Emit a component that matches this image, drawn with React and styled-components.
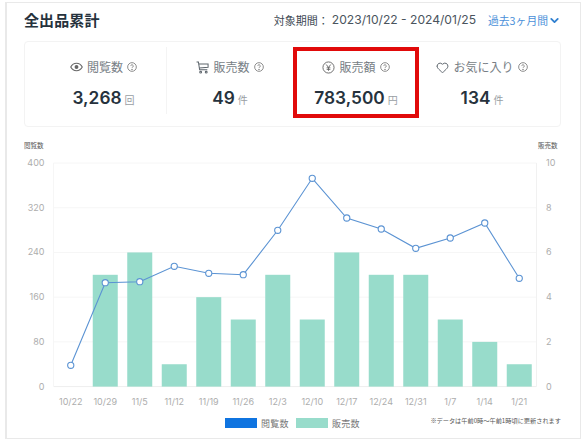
import React from 'react';
import styled, { createGlobalStyle } from 'styled-components';
import { Heart, ChevronDown } from 'lucide-react';

const Global = createGlobalStyle`
  html, body { margin: 0; padding: 0; background: #fff; }
  body { font-family: "Inter", "Noto Sans CJK JP", sans-serif; }
`;
const Page = styled.div`
  width: 586px; height: 442px; box-sizing: border-box; padding: 2px 5px 3px 5px; overflow: hidden;
`;
const Card = styled.section`
  box-sizing: border-box; height: 100%; border: 1px solid #e9e9e9; border-left-width: 2px;
  padding: 0 19px 0 17px; display: flex; flex-direction: column; background: #fff;
`;
const Header = styled.header`
  height: 38px; display: flex; align-items: center; justify-content: space-between; padding-bottom: 6px; box-sizing: border-box;
`;
const Title = styled.h1`
  margin: 0; font: 700 15px/1 "Noto Sans CJK JP", sans-serif; color: #26323d; letter-spacing: 0.1px;
`;
const Period = styled.div`
  display: flex; align-items: center; font: 400 11px/1 "Noto Sans CJK JP", sans-serif; color: #3d4852; padding-top: 2px;
`;
const Dates = styled.span`
  font-family: "Inter", sans-serif; font-size: 12.1px; margin-left: 3px; color: #4a545d;
`;
const RangeButton = styled.button`
  display: flex; align-items: center; gap: 0; margin-left: 12px; padding: 0; border: 0; background: none;
  font: 400 10.8px/1 "Noto Sans CJK JP", sans-serif; color: #4a90d9;
  svg { color: #2f7fd0; }
`;
const StatsPanel = styled.div`
  height: 86px; box-sizing: border-box; border: 1px solid #f3f3f3; border-radius: 4px; padding: 5px 16px 8px;
  display: grid; grid-template-columns: repeat(4, 126px); flex-shrink: 0;
`;
const Stat = styled.div`
  box-sizing: border-box; display: flex; flex-direction: column; align-items: center; padding-top: ${p => p.$hi ? '8px' : '12px'};
  border: ${p => p.$hi ? '4px solid #e10a0a' : '0'};
  border-right: ${p => p.$hi ? '4px solid #e10a0a' : p.$divider ? '1px solid #f4f4f4' : '0'};
  height: ${p => p.$hi ? '71px' : '67px'};
`;
const StatLabel = styled.div`
  display: flex; align-items: center; gap: 4px; font: 400 12px/16px "Noto Sans CJK JP", sans-serif; color: #777e85; height: 16px;
  svg { flex-shrink: 0; }
`;
const StatValue = styled.div`
  display: flex; align-items: baseline; gap: 3px; margin-top: 13px; font: 600 17.3px/20px "Inter", sans-serif; color: #26323d;
`;
const Unit = styled.span`
  font: 400 10px/1 "Noto Sans CJK JP", sans-serif; color: #999ea3;
`;
const Chart = styled.svg`
  display: block; width: 537px; height: 273px; margin-top: 10px; flex-shrink: 0;
`;
const AxisTitle = styled.text`
  font: 400 6.5px "Noto Sans CJK JP", sans-serif; fill: #555;
`;
const Tick = styled.text`
  font: 400 9px "Inter", "Liberation Sans", sans-serif; fill: #adadad;
`;
const Legend = styled.footer`
  display: flex; align-items: center; height: 26px; padding-left: 201px;
`;
const Swatch = styled.span`
  width: 32px; height: 10px; background: ${p => p.$color}; margin-right: 4px;
`;
const LegendLabel = styled.span`
  font: 400 9px/1 "Noto Sans CJK JP", sans-serif; color: #777; margin-right: 7px; letter-spacing: 0.3px;
`;
const Note = styled.span`
  margin-left: auto; margin-top: -3px; font: 400 6.2px/1 "Noto Sans CJK JP", sans-serif; color: #555;
`;

const Help = ({ s = 10 }) => (
  <svg width={s} height={s} viewBox="0 0 12 12" fill="none" stroke="#777" strokeWidth="1">
    <circle cx="6" cy="6" r="5.2" />
    <path d="M4.500 4.800a1.500 1.500 0 1 1 2.300 1.300c-.5.3-.8.6-.8 1.100" />
    <circle cx="6" cy="8.900" r=".4" fill="#777" />
  </svg>
);
const EyeIcon = () => (
  <svg width="13" height="10" viewBox="0 0 14 10" fill="none" stroke="#666" strokeWidth="1.200">
    <path d="M.8 5C2.200 2.400 4.400 1 7 1s4.800 1.400 6.200 4C11.800 7.600 9.600 9 7 9S2.200 7.600.8 5z" />
    <circle cx="7" cy="5" r="2.100" fill="#666" stroke="none" />
  </svg>
);
const CartIcon = () => (
  <svg width="13" height="13" viewBox="0 0 14 14" fill="none" stroke="#5e666d" strokeWidth="1.100">
    <path d="M.6 1h2l1.300 8.500h8.300" />
    <path d="M3 3.300h10v3.500l-9.400.8" />
    <circle cx="5" cy="12" r="1" />
    <circle cx="11" cy="12" r="1" />
  </svg>
);
const YenIcon = () => (
  <svg width="13" height="13" viewBox="0 0 14 14" fill="none" stroke="#666" strokeWidth="1">
    <circle cx="7" cy="7" r="6" />
    <path d="M4.600 3.800 7 7l2.400-3.200M7 7v3.500M5 7.300h4M5 9h4" />
  </svg>
);

const categories = ['10/22','10/29','11/5','11/12','11/19','11/26','12/3','12/10','12/17','12/24','12/31','1/7','1/14','1/21'];
const sales = [0,5,6,1,4,3,5,3,6,5,5,3,2,1];
const lineY = [365.3,282.7,281.7,266.3,273.3,274.7,230.3,178.3,218,229,248.3,238,223,278.3];
const TOP = 163, BOTTOM = 386.6, LEFT = 53.5, RIGHT = 536.5;
const band = (RIGHT - LEFT) / 14;
const cx = i => LEFT + band * (i + 0.5);
const leftTicks = [400, 320, 240, 160, 80, 0];
const rightTicks = [10, 8, 6, 4, 2, 0];

const stats = [
  { icon: <EyeIcon />, label: '閲覧数', value: '3,268', unit: '回', divider: true },
  { icon: <CartIcon />, label: '販売数', value: '49', unit: '件' },
  { icon: <YenIcon />, label: '販売額', value: '783,500', unit: '円', hi: true },
  { icon: <Heart size={13} color="#5e666d" strokeWidth={1.8} />, label: 'お気に入り', value: '134', unit: '件' },
];

export default function App() {
  const tickY = i => TOP + (BOTTOM - TOP) * i / 5;
  return (
    <Page>
      <Global />
      <Card>
        <Header>
          <Title>全出品累計</Title>
          <Period>
            対象期間：<Dates>2023/10/22 - 2024/01/25</Dates>
            <RangeButton>過去3ヶ月間<ChevronDown size={13} strokeWidth={3.4} /></RangeButton>
          </Period>
        </Header>
        <StatsPanel>
          {stats.map(s => (
            <Stat key={s.label} $hi={s.hi} $divider={s.divider}>
              <StatLabel>{s.icon}{s.label}<Help /></StatLabel>
              <StatValue>{s.value}<Unit>{s.unit}</Unit></StatValue>
            </Stat>
          ))}
        </StatsPanel>
        <Chart viewBox="24 137 537 273">
          <AxisTitle x="24" y="148">閲覧数</AxisTitle>
          <AxisTitle x="538" y="148">販売数</AxisTitle>
          {leftTicks.map((t, i) => (
            <g key={t}>
              <line x1={LEFT} x2={RIGHT} y1={tickY(i)} y2={tickY(i)} stroke={i === 5 ? '#eeeeee' : '#f6f6f6'} />
              <Tick x="44.500" y={tickY(i) + 3} textAnchor="end">{t}</Tick>
            </g>
          ))}
          <line x1={LEFT} x2={LEFT} y1={TOP} y2={BOTTOM} stroke="#f6f6f6" />
          <line x1={RIGHT} x2={RIGHT} y1={TOP} y2={BOTTOM} stroke="#f1f1f1" />
          {rightTicks.map((t, i) => (
            <Tick key={t} x="546" y={tickY(i) + 3}>{t}</Tick>
          ))}
          {sales.map((v, i) => {
            const h = v * (BOTTOM - TOP) / 10;
            return <rect key={i} x={cx(i) - 12.500} width="25" y={BOTTOM - h} height={h} fill="#98dccb" />;
          })}
          <polyline points={lineY.map((y, i) => `${cx(i)},${y}`).join(' ')} fill="none" stroke="#5b93d3" strokeWidth="1.100" />
          {lineY.map((y, i) => (
            <circle key={i} cx={cx(i)} cy={y} r="3.100" fill="#fff" stroke="#5b93d3" strokeWidth="1.100" />
          ))}
          {categories.map((c, i) => (
            <Tick key={c} x={cx(i)} y="405" textAnchor="middle">{c}</Tick>
          ))}
        </Chart>
        <Legend>
          <Swatch $color="#0f74e0" />
          <LegendLabel>閲覧数</LegendLabel>
          <Swatch $color="#98dccb" />
          <LegendLabel>販売数</LegendLabel>
          <Note>※データは午前0時〜午前1時頃に更新されます</Note>
        </Legend>
      </Card>
    </Page>
  );
}
